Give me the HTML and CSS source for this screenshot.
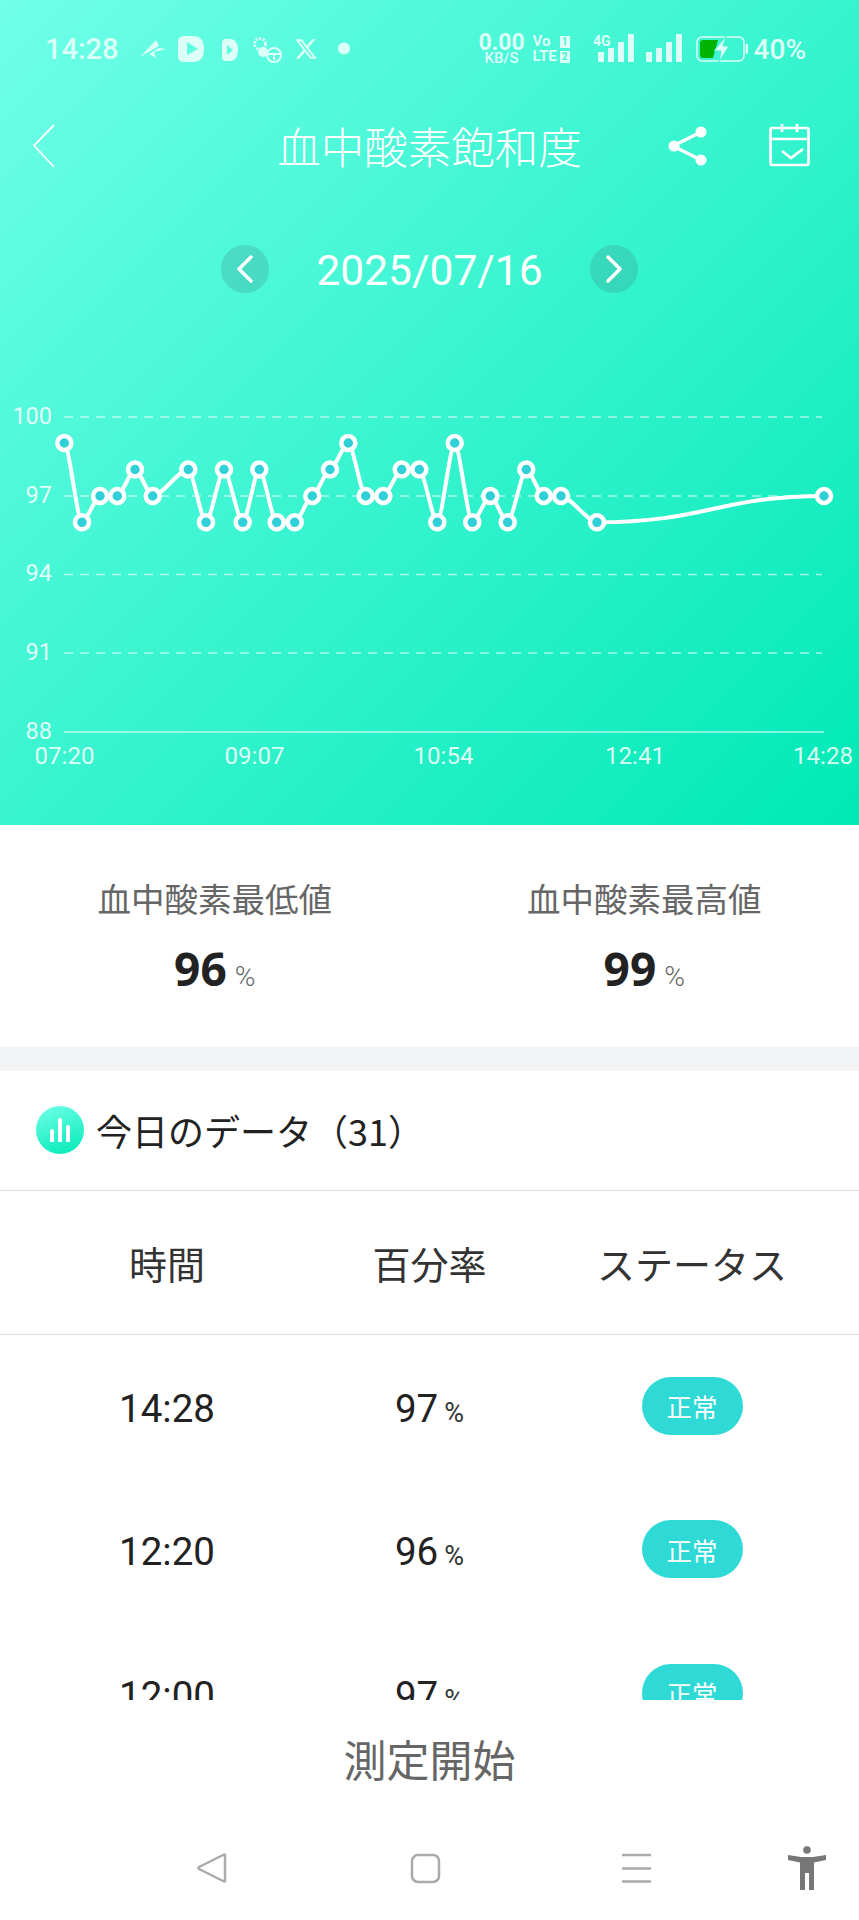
FILE: index.html
```html
<!DOCTYPE html>
<html lang="ja">
<head>
    <meta charset="UTF-8">
    <meta name="viewport" content="width=device-width, initial-scale=1.0">
    <title>血中酸素飽和度</title>
    <link rel="stylesheet" href="styles.css">
</head>
<body>
<div class="phone">

    <div class="hero">
        <div class="status">
            <div class="status-left">
                <span class="clock">14:28</span>
                <svg class="notif" width="210" height="30" viewBox="139 35 210 30">
                    <path d="M139 58 L155 41 L158 47 Z M142 59 L158 49 L165 50 L153 53 L155 59 L148 55 Z" fill="#dcfff8"/>
                    <path d="M183 37 H192 Q203 37 203 50 Q203 63 192 63 H183 Q177 63 177 57 V43 Q177 37 183 37 Z M186 43 V56 L197 50 Z" fill="#dcfff8" fill-rule="evenodd"/>
                    <path d="M225 40 H230 Q237 41 237 51 Q237 61 230 62 H225 Q221 62 221 58 V44 Q221 40 225 40 Z M226 46 V56 L232 51 Z" fill="#dcfff8" fill-rule="evenodd"/>
                    <circle cx="259" cy="45" r="5.500" fill="none" stroke="#dcfff8" stroke-width="3" stroke-dasharray="2 1.500"/>
                    <circle cx="262" cy="53" r="5" fill="#dcfff8"/>
                    <circle cx="273" cy="56" r="7" fill="none" stroke="#dcfff8" stroke-width="2"/>
                    <path d="M266 55 H280 M273 55 V61" stroke="#dcfff8" stroke-width="2" fill="none"/>
                    <g transform="translate(293 38)">
                        <path d="M18.244 2.25h3.308l-7.227 8.26 8.502 11.24H16.17l-5.214-6.817L4.99 21.75H1.68l7.73-8.835L1.254 2.25H8.08l4.713 6.231zm-1.161 17.52h1.833L7.084 4.126H5.117z" fill="#dcfff8"/>
                    </g>
                    <circle cx="343" cy="49.500" r="6" fill="#dcfff8"/>
                </svg>
            </div>
            <div class="status-right">
                <div class="speed"><b>0.00</b><small>KB/S</small></div>
                <div class="volte">
                    <div class="volte-row">Vo <i>1</i></div>
                    <div class="volte-row">LTE<i>2</i></div>
                </div>
                <svg class="signal" width="97" height="30" viewBox="585 35 97 30">
                    <text x="592" y="47" class="signal-tag">4G</text>
                    <rect x="597" y="53" width="6" height="10" fill="#dcfff8"/>
                    <rect x="607" y="49" width="6" height="14" fill="#dcfff8"/>
                    <rect x="617" y="43" width="6" height="20" fill="#dcfff8"/>
                    <rect x="627" y="35" width="6" height="28" fill="#dcfff8"/>
                    <rect x="645" y="53" width="6" height="10" fill="#dcfff8"/>
                    <rect x="655" y="49" width="6" height="14" fill="#dcfff8"/>
                    <rect x="665" y="43" width="6" height="20" fill="#dcfff8"/>
                    <rect x="675" y="35" width="6" height="28" fill="#dcfff8"/>
                </svg>
                <svg class="battery" width="52" height="28" viewBox="695 36 52 28">
                    <rect x="696" y="38" width="47" height="24" rx="5" fill="none" stroke="#dcfff8" stroke-width="1.500"/>
                    <rect x="744.500" y="45" width="2.500" height="10" rx="1" fill="#dcfff8"/>
                    <path d="M702 41 H717 L712 59 H702 Q699 59 699 56 V44 Q699 41 702 41 Z" fill="#00b400"/>
                    <path d="M725 37 L713 52 H720 L718 63 L728 47 H722 Z" fill="#dcfff8" stroke="#44f3d3" stroke-width="1"/>
                </svg>
                <span class="batt-pct">40%</span>
            </div>
        </div>

        <div class="topbar">
            <svg class="back" width="24" height="46" viewBox="0 0 24 46">
                <path d="M22 2 L2 22.500 L22 44" fill="none" stroke="#fff" stroke-width="1.800"/>
            </svg>
            <h1 class="title">血中酸素飽和度</h1>
            <div class="top-actions">
                <svg width="40" height="42" viewBox="668 124 40 42">
                    <path d="M702 131 L674 145 L702 159" fill="none" stroke="#fff" stroke-width="3.500"/>
                    <circle cx="702" cy="131" r="5.500" fill="#fff"/>
                    <circle cx="675" cy="145" r="5.500" fill="#fff"/>
                    <circle cx="702" cy="159" r="5.500" fill="#fff"/>
                </svg>
                <svg width="42" height="44" viewBox="770 124 42 44">
                    <rect x="771.500" y="128" width="38" height="37" rx="2" fill="none" stroke="#fff" stroke-width="2.700"/>
                    <path d="M771 139 H810 M783 124 V132 M798 124 V132" fill="none" stroke="#fff" stroke-width="2.700"/>
                    <path d="M783 151 L792 158 L804 149" fill="none" stroke="#fff" stroke-width="2.700"/>
                </svg>
            </div>
        </div>

        <div class="date-nav">
            <div class="date-btn">
                <svg width="18" height="28" viewBox="0 0 18 28"><path d="M15 2 L3 14 L15 26" fill="none" stroke="#fff" stroke-width="3.500" stroke-linecap="round" stroke-linejoin="round"/></svg>
            </div>
            <span class="date-text">2025/07/16</span>
            <div class="date-btn">
                <svg width="18" height="28" viewBox="0 0 18 28"><path d="M3 2 L15 14 L3 26" fill="none" stroke="#fff" stroke-width="3.500" stroke-linecap="round" stroke-linejoin="round"/></svg>
            </div>
        </div>

        <svg class="chart" width="859" height="380" viewBox="0 400 859 380">
            <g class="grid">
                <line x1="64" y1="417" x2="822" y2="417"/>
                <line x1="64" y1="496" x2="822" y2="496"/>
                <line x1="64" y1="574.500" x2="822" y2="574.500"/>
                <line x1="64" y1="653" x2="822" y2="653"/>
            </g>
            <line class="baseline" x1="64" y1="732" x2="824" y2="732"/>

            <g class="y-labels">
                <text x="52" y="424">100</text>
                <text x="52" y="503">97</text>
                <text x="52" y="581">94</text>
                <text x="52" y="660">91</text>
                <text x="52" y="739">88</text>
            </g>
            <g class="x-labels">
                <text x="64.500" y="764">07:20</text>
                <text x="254.500" y="764">09:07</text>
                <text x="443.500" y="764">10:54</text>
                <text x="635" y="764">12:41</text>
                <text x="823" y="764">14:28</text>
            </g>

            <path class="line" d="M64.300 443 C68.700 443 77.600 522.300 82 522.300 C86.400 522.300 95.600 496 100 496 L117.300 496 C121.700 496 130.600 469.500 135 469.500 C139.400 469.500 148.300 496 152.700 496 C161.700 496 179.300 469.500 188.300 469.500 C192.700 469.500 201.600 522.300 206 522.300 C210.400 522.300 219.600 469.500 224 469.500 C228.400 469.500 238.300 522.300 242.700 522.300 C247.100 522.300 254.900 469.500 259.300 469.500 C263.700 469.500 272.300 522.300 276.700 522.300 L294.700 522.300 C299.100 522.300 307.900 496 312.300 496 C316.700 496 325.600 469.500 330 469.500 C334.400 469.500 343.900 443 348.300 443 C352.700 443 361.300 496 365.700 496 L383.300 496 C387.700 496 397.300 469.500 401.700 469.500 L419.300 469.500 C423.700 469.500 432.900 522.300 437.300 522.300 C441.700 522.300 450.300 443 454.700 443 C459.100 443 467.900 522.300 472.300 522.300 C476.700 522.300 485.900 496 490.300 496 C494.700 496 503.300 522.300 507.700 522.300 C512.100 522.300 521.900 469.500 526.300 469.500 C530.700 469.500 539.300 496 543.700 496 L561 496 C570 496 588 522.300 597 522.300 C705 522.300 720 496 824 496"/>

            <g class="dots">
                <circle cx="64.300" cy="443" r="7"/>
                <circle cx="82" cy="522.300" r="7"/>
                <circle cx="100" cy="496" r="7"/>
                <circle cx="117.300" cy="496" r="7"/>
                <circle cx="135" cy="469.500" r="7"/>
                <circle cx="152.700" cy="496" r="7"/>
                <circle cx="188.300" cy="469.500" r="7"/>
                <circle cx="206" cy="522.300" r="7"/>
                <circle cx="224" cy="469.500" r="7"/>
                <circle cx="242.700" cy="522.300" r="7"/>
                <circle cx="259.300" cy="469.500" r="7"/>
                <circle cx="276.700" cy="522.300" r="7"/>
                <circle cx="294.700" cy="522.300" r="7"/>
                <circle cx="312.300" cy="496" r="7"/>
                <circle cx="330" cy="469.500" r="7"/>
                <circle cx="348.300" cy="443" r="7"/>
                <circle cx="365.700" cy="496" r="7"/>
                <circle cx="383.300" cy="496" r="7"/>
                <circle cx="401.700" cy="469.500" r="7"/>
                <circle cx="419.300" cy="469.500" r="7"/>
                <circle cx="437.300" cy="522.300" r="7"/>
                <circle cx="454.700" cy="443" r="7"/>
                <circle cx="472.300" cy="522.300" r="7"/>
                <circle cx="490.300" cy="496" r="7"/>
                <circle cx="507.700" cy="522.300" r="7"/>
                <circle cx="526.300" cy="469.500" r="7"/>
                <circle cx="543.700" cy="496" r="7"/>
                <circle cx="561" cy="496" r="7"/>
                <circle cx="597" cy="522.300" r="7"/>
                <circle cx="824" cy="496" r="7"/>
            </g>
        </svg>
    </div>

    <div class="stats">
        <div class="stat">
            <div class="stat-label">血中酸素最低値</div>
            <div class="stat-value"><b>96</b><span>%</span></div>
        </div>
        <div class="stat">
            <div class="stat-label">血中酸素最高値</div>
            <div class="stat-value"><b>99</b><span>%</span></div>
        </div>
    </div>

    <div class="band"></div>

    <div class="section-title">
        <span class="section-icon">
            <svg width="22" height="24" viewBox="0 0 22 24">
                <path d="M3 24 V13 M11 24 V2 M19 24 V9" fill="none" stroke="#fff" stroke-width="4" stroke-linecap="round"/>
            </svg>
        </span>
        <span>今日のデータ（31）</span>
    </div>

    <div class="table-head">
        <span>時間</span>
        <span>百分率</span>
        <span>ステータス</span>
    </div>

    <div class="rows">
        <div class="row">
            <span class="cell">14:28</span>
            <span class="cell">97<small>%</small></span>
            <span><em class="pill">正常</em></span>
        </div>
        <div class="row">
            <span class="cell">12:20</span>
            <span class="cell">96<small>%</small></span>
            <span><em class="pill">正常</em></span>
        </div>
        <div class="row">
            <span class="cell">12:00</span>
            <span class="cell">97<small>%</small></span>
            <span><em class="pill">正常</em></span>
        </div>
    </div>

    <div class="start-btn">測定開始</div>

    <div class="navbar">
        <svg width="32" height="32" viewBox="196 852 32 32">
            <path d="M225 855 V881 Q225 882 223 881 L199 869 Q198 868 199 867 L223 855 Q225 854 225 855 Z" fill="none" stroke="#aaa" stroke-width="2.500" stroke-linejoin="round"/>
        </svg>
        <svg width="32" height="32" viewBox="409 852 32 32">
            <rect x="412" y="855" width="27" height="27" rx="6" fill="none" stroke="#aaa" stroke-width="2.500"/>
        </svg>
        <svg width="32" height="32" viewBox="621 852 32 32">
            <path d="M622 855 H651 M622 868.500 H651 M622 881.500 H651" stroke="#aaa" stroke-width="2.500" fill="none"/>
        </svg>
        <svg width="38" height="44" viewBox="0 0 38 44">
            <circle cx="19" cy="4" r="3.800" fill="#777"/>
            <path d="M0 9 L13 11 H25 L38 9 V14 L26 16.500 V44 H21 V27 H17 V44 H12 V16.500 L0 14 Z" fill="#777"/>
        </svg>
    </div>

</div>
</body>
</html>
```

FILE: styles.css
```css
* {
    box-sizing: border-box;
}
html, body {
    margin: 0;
    padding: 0;
    background-color: #fff;
}
body {
    font-family: Roboto, "Noto Sans CJK JP", sans-serif;
    color: #222;
}
.phone {
    width: 859px;
    height: 1920px;
    overflow: hidden;
    display: flex;
    flex-direction: column;
}

/* header */
.hero {
    height: 825px;
    background: linear-gradient(135deg, #70ffe9 0%, #00e9b6 100%);
    color: #fff;
}
.status {
    height: 98px;
    padding: 0 53px 0 45px;
    display: flex;
    justify-content: space-between;
    align-items: center;
    color: #dcfff8;
}
.status-left {
    display: flex;
    align-items: center;
    gap: 21px;
}
.clock {
    font-size: 29px;
    font-weight: 500;
}
.status-right {
    display: flex;
    align-items: center;
}
.speed {
    width: 46px;
    display: flex;
    flex-direction: column;
    align-items: center;
    line-height: 14px;
}
.speed b {
    font-size: 23px;
    line-height: 17px;
}
.speed small {
    font-size: 15px;
    font-weight: 500;
}
.volte {
    width: 37px;
    margin-left: 8px;
    font-size: 15px;
    font-weight: 700;
    line-height: 15px;
}
.volte-row {
    display: flex;
    justify-content: space-between;
    align-items: center;
    white-space: pre;
}
.volte-row i {
    width: 10px;
    height: 12px;
    background-color: #dcfff8;
    color: #44f3d3;
    font-size: 10px;
    font-style: normal;
    line-height: 12px;
    text-align: center;
}
.signal {
    margin-left: 16px;
}
.signal-tag {
    font-size: 14px;
    font-weight: 700;
    fill: #dcfff8;
}
.battery {
    margin-left: 13px;
}
.batt-pct {
    margin-left: 6px;
    font-size: 28px;
    font-weight: 500;
}
.topbar {
    height: 96px;
    padding: 0 48px;
    display: grid;
    grid-template-columns: 1fr auto 1fr;
    align-items: center;
}
.back {
    margin-left: -16px;
}
.title {
    margin: 0;
    font-family: "Noto Sans CJK JP", sans-serif;
    font-size: 43.500px;
    font-weight: 300;
    line-height: 60px;
}
.top-actions {
    justify-self: end;
    display: flex;
    align-items: center;
    gap: 62px;
}
.date-nav {
    margin-top: 51px;
    display: flex;
    justify-content: center;
    align-items: center;
    gap: 47px;
}
.date-btn {
    width: 48px;
    height: 48px;
    border-radius: 50%;
    background-color: rgba(60, 130, 130, 0.25);
    display: flex;
    align-items: center;
    justify-content: center;
}
.date-text {
    font-size: 42.500px;
    line-height: 48px;
    position: relative;
    top: 2px;
}

/* chart */
.chart {
    display: block;
    margin-top: 107px;
}
.grid line {
    stroke: rgba(255, 255, 255, 0.6);
    stroke-width: 1.500;
    stroke-dasharray: 9 7;
}
.baseline {
    stroke: rgba(255, 255, 255, 0.65);
    stroke-width: 1.500;
}
.y-labels text {
    font-size: 23.500px;
    fill: rgba(255, 255, 255, 0.85);
    text-anchor: end;
}
.x-labels text {
    font-size: 24px;
    fill: rgba(255, 255, 255, 0.85);
    text-anchor: middle;
}
.line {
    fill: none;
    stroke: #fff;
    stroke-width: 4;
    stroke-linejoin: round;
}
.dots circle {
    fill: #2fd0d8;
    stroke: #fff;
    stroke-width: 4.500;
}

/* min and max */
.stats {
    height: 222px;
    display: flex;
    padding-top: 49px;
}
.stat {
    flex: 1;
    text-align: center;
}
.stat-label {
    font-family: "Noto Sans CJK JP", sans-serif;
    font-size: 33.500px;
    line-height: 48px;
    color: #666;
}
.stat-value {
    margin-top: 16px;
    height: 60px;
    display: flex;
    justify-content: center;
    align-items: baseline;
}
.stat-value b {
    font-family: "Noto Sans", sans-serif;
    font-size: 46px;
    line-height: 60px;
    color: #222;
}
.stat-value span {
    margin-left: 8px;
    font-size: 28px;
    font-weight: 300;
    color: #666;
}
.band {
    height: 24px;
    background-color: #f1f3f4;
}

/* data list */
.section-title {
    height: 120px;
    padding: 0 0 2px 36px;
    border-bottom: 1px solid #ddd;
    display: flex;
    align-items: center;
    gap: 12px;
    font-family: "Noto Sans CJK JP", sans-serif;
    font-size: 36px;
    color: #222;
}
.section-icon {
    width: 48px;
    height: 48px;
    border-radius: 50%;
    background: linear-gradient(160deg, #70ffe9 0%, #00e9b6 100%);
    display: flex;
    align-items: center;
    justify-content: center;
}
.table-head, .row {
    display: grid;
    grid-template-columns: 334px 191px 334px;
    align-items: center;
    text-align: center;
}
.table-head {
    height: 144px;
    border-bottom: 1px solid #ddd;
    font-family: "Noto Sans CJK JP", sans-serif;
    font-size: 38px;
    color: #333;
}
.rows {
    height: 365px;
    overflow: hidden;
}
.row {
    height: 143.500px;
    font-size: 38.500px;
}
.cell {
    padding-top: 3px;
}
.row small {
    margin-left: 6px;
    font-size: 27px;
    color: #333;
}
.pill {
    width: 101px;
    height: 58px;
    margin: -2px auto 0;
    border-radius: 29px;
    background-color: #2fd9d6;
    color: #fff;
    font-family: "Noto Sans CJK JP", sans-serif;
    font-size: 25.500px;
    font-style: normal;
    display: flex;
    align-items: center;
    justify-content: center;
}
.start-btn {
    height: 120px;
    padding-bottom: 4px;
    display: flex;
    align-items: center;
    justify-content: center;
    font-family: "Noto Sans CJK JP", sans-serif;
    font-size: 43px;
    color: #666;
}

/* android buttons */
.navbar {
    height: 100px;
    padding: 0 0 4px 196px;
    display: grid;
    grid-template-columns: 213px 212px 167px 38px;
    align-items: center;
}
```
